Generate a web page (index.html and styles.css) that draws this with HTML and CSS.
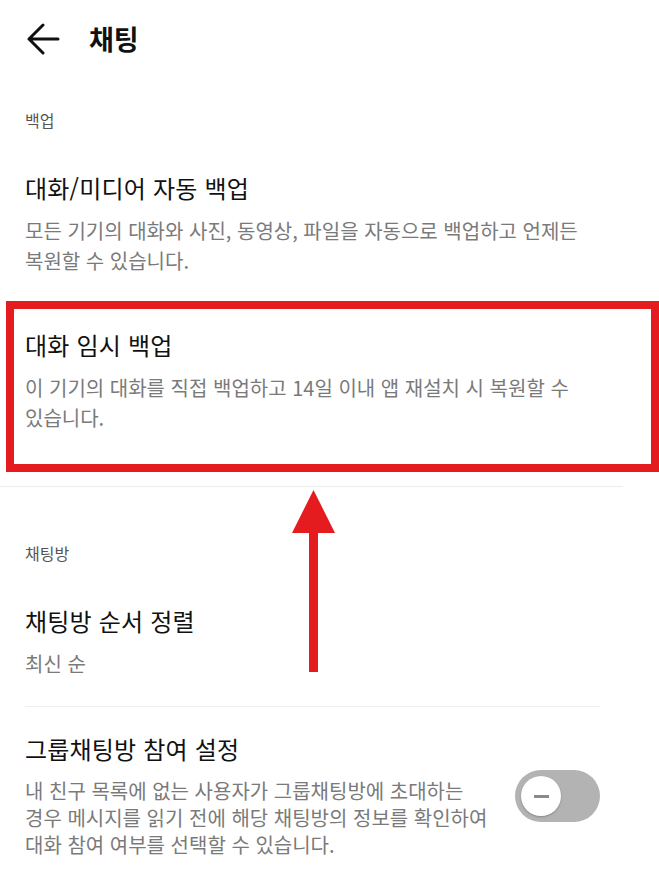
FILE: index.html
```html
<!DOCTYPE html>
<html lang="ko">
<head>
  <meta charset="UTF-8">
  <title>채팅</title>
  <link rel="stylesheet" href="styles.css">
</head>
<body>
  <div class="screen">
    <div class="top-bar">
      <svg class="back-icon" width="34" height="32" viewBox="0 0 34 32">
        <path d="M32 16 H3 M17 2 L3 16 L17 30" fill="none" stroke="#111" stroke-width="3" stroke-linecap="round" stroke-linejoin="round"/>
      </svg>
      <h1>채팅</h1>
    </div>

    <div class="section section-backup">
      <div class="section-label">백업</div>
      <div class="item">
        <div class="item-title">대화/미디어 자동 백업</div>
        <div class="item-desc">모든 기기의 대화와 사진, 동영상, 파일을 자동으로 백업하고 언제든 복원할 수 있습니다.</div>
      </div>
      <div class="item">
        <div class="item-title">대화 임시 백업</div>
        <div class="item-desc">이 기기의 대화를 직접 백업하고 14일 이내 앱 재설치 시 복원할 수 있습니다.</div>
      </div>
    </div>

    <div class="section section-room">
      <div class="section-label">채팅방</div>
      <div class="item item-line">
        <div class="item-title">채팅방 순서 정렬</div>
        <div class="item-desc">최신 순</div>
      </div>
      <div class="item item-switch">
        <div class="item-text">
          <div class="item-title">그룹채팅방 참여 설정</div>
          <div class="item-desc">내 친구 목록에 없는 사용자가 그룹채팅방에 초대하는 경우 메시지를 읽기 전에 해당 채팅방의 정보를 확인하여 대화 참여 여부를 선택할 수 있습니다.</div>
        </div>
        <div class="switch">
          <div class="switch-thumb"><span></span></div>
        </div>
      </div>
    </div>

    <!-- annotation -->
    <div class="highlight-box"></div>
    <svg class="highlight-arrow" width="43" height="182" viewBox="0 0 43 182">
      <path d="M21.5 0 L43 43 L0 43 Z" fill="#e51c1f"/>
      <rect x="17" y="42" width="9" height="140" fill="#e51c1f"/>
    </svg>
  </div>
</body>
</html>
```

FILE: styles.css
```css
body {
  margin: 0;
  background: #fff;
  font-family: "Noto Sans CJK KR", "Noto Sans", sans-serif;
  color: #111;
  word-break: keep-all;
}
.screen {
  position: relative;
  width: 659px;
  height: 870px;
  overflow: hidden;
}
.top-bar {
  display: flex;
  align-items: center;
  height: 78px;
  padding-left: 26px;
}
.back-icon {
  display: block;
}
.top-bar h1 {
  margin: 0 0 0 29px;
  font-size: 27px;
  font-weight: bold;
  line-height: 30px;
}
.section {
  padding-left: 25px;
}
.section-backup {
  padding-top: 32px;
  padding-bottom: 26px;
  margin-right: 36px;
  border-bottom: 1px solid #ececec;
}
.section-room {
  padding-top: 56px;
  padding-right: 59px;
}
.section-label {
  font-size: 16px;
  line-height: 20px;
  color: #555;
  margin-bottom: 16px;
}
.item {
  padding: 27px 0;
}
.item-line {
  border-bottom: 1px solid #efefef;
}
.item-title {
  font-size: 24px;
  line-height: 30px;
  letter-spacing: 0.2px;
  color: #111;
  margin-bottom: 13px;
}
.item-desc {
  font-size: 20px;
  line-height: 30px;
  color: #7a7a7a;
}
.item-switch {
  display: flex;
  align-items: center;
  gap: 20px;
}
.item-switch .item-desc {
  line-height: 27px;
}
.item-text {
  flex: 1;
}
.switch {
  flex: none;
  width: 85px;
  height: 52px;
  border-radius: 26px;
  background: #b3b3b3;
  display: flex;
  align-items: center;
  padding-left: 6px;
  box-sizing: border-box;
}
.switch-thumb {
  width: 40px;
  height: 40px;
  border-radius: 50%;
  background: #fff;
  box-shadow: 0 1px 2px rgba(0,0,0,0.25);
  display: flex;
  align-items: center;
  justify-content: center;
}
.switch-thumb span {
  width: 15px;
  height: 3px;
  background: #8a8a8a;
}
.highlight-box {
  position: absolute;
  left: 6px;
  top: 301px;
  width: 653px;
  height: 171px;
  border: 8px solid #e51c1f;
  box-sizing: border-box;
}
.highlight-arrow {
  position: absolute;
  left: 292px;
  top: 490px;
}
```
